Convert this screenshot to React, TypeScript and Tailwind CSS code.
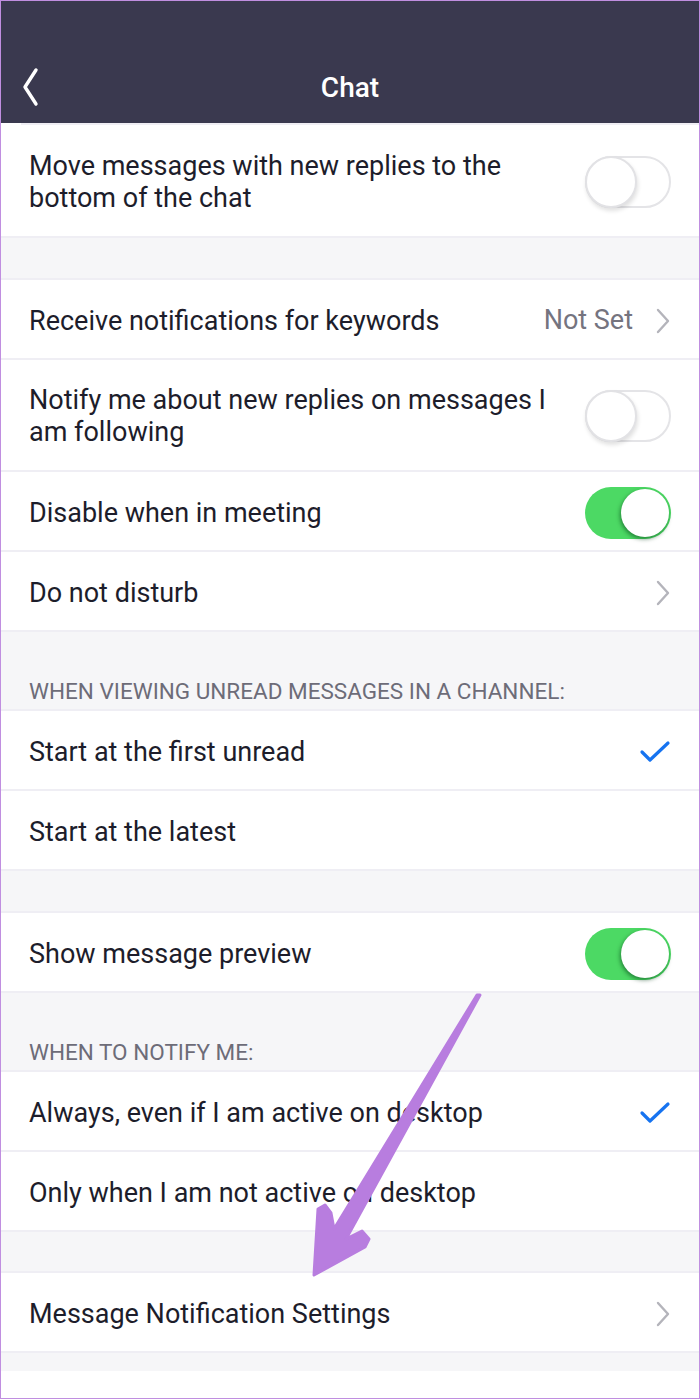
import React from 'react'

function Toggle({ on }: { on: boolean }) {
  if (on) {
    return (
      <div className="relative w-[86px] h-[52px] rounded-full bg-[#4cd964] shrink-0">
        <div className="absolute right-[2px] top-[2px] w-[48px] h-[48px] rounded-full bg-white shadow-[-1px_2px_4px_rgba(0,60,20,0.55)]" />
      </div>
    )
  }
  return (
    <div className="relative w-[86px] h-[52px] rounded-full bg-white border-2 border-[#e4e4e7] shrink-0">
      <div className="absolute -left-[2px] -top-[2px] w-[52px] h-[52px] rounded-full bg-white border-2 border-[#e2e2e5] shadow-[1px_3px_4px_rgba(0,0,0,0.12)]" />
    </div>
  )
}

function Chevron() {
  return (
    <svg width="16" height="28" viewBox="0 0 16 28" className="shrink-0">
      <path d="M3 3 L13 14 L3 25" fill="none" stroke="#b4b4bb" strokeWidth="2.4" strokeLinecap="round" strokeLinejoin="round" />
    </svg>
  )
}

function Check() {
  return (
    <svg width="32" height="24" viewBox="0 0 32 24" className="shrink-0">
      <path d="M3 12 L11 20 L29 3" fill="none" stroke="#1673f0" strokeWidth="3.2" strokeLinecap="round" strokeLinejoin="round" />
    </svg>
  )
}

function Row({ children, right, tall }: { children: React.ReactNode; right?: React.ReactNode; tall?: string }) {
  return (
    <div className={`flex items-center justify-between pl-[28px] pr-[28px] bg-white border-b-2 border-[#efeef4] ${tall ? tall + ' pt-[2px]' : 'h-[80px] pt-[3px]'}`}>
      <div className="text-[27px] leading-[32px] text-[#1d1d2b] pr-4">{children}</div>
      {right}
    </div>
  )
}

function Gap({ h = 'h-[42px]' }: { h?: string }) {
  return <div className={`${h} bg-[#f6f6f8] border-b-2 border-[#efeef4]`} />
}

function SectionTitle({ text }: { text: string }) {
  return (
    <div className="h-[79px] bg-[#f6f6f8] border-b-2 border-[#efeef4] flex items-end pl-[28px] pb-[4px]">
      <span className="text-[22.5px] leading-[28px] text-[#6d6c78]">{text}</span>
    </div>
  )
}

export default function App() {
  return (
    <div className="w-[700px] h-[1399px] border border-[#c08ee0] bg-white overflow-hidden relative" style={{ fontFamily: 'Roboto, "Noto Sans", sans-serif' }}>
      <header className="h-[122px] bg-[#3a394f] relative flex items-end justify-center pb-[17px]">
        <svg width="24" height="40" viewBox="0 0 24 40" className="absolute left-[19px] bottom-[16px]">
          <path d="M16 3 L5 20 L16 37" fill="none" stroke="white" strokeWidth="3.4" strokeLinecap="round" strokeLinejoin="round" />
        </svg>
        <h1 className="text-white text-[28px] font-medium leading-[36px]">Chat</h1>
      </header>
      <div className="h-[2px] bg-white"><div className="ml-[20px] h-[2px] bg-[#efeef4]" /></div>

      <Row tall="h-[113px]" right={<Toggle on={false} />}>
        Move messages with new replies to the<br />bottom of the chat
      </Row>
      <Gap />
      <Row
        right={
          <div className="flex items-center gap-[22px]">
            <span className="text-[27px] text-[#75747f]">Not Set</span>
            <Chevron />
          </div>
        }
      >
        Receive notifications for keywords
      </Row>
      <Row tall="h-[112px]" right={<Toggle on={false} />}>
        Notify me about new replies on messages I<br />am following
      </Row>
      <Row right={<Toggle on />}>Disable when in meeting</Row>
      <Row right={<Chevron />}>Do not disturb</Row>
      <SectionTitle text="WHEN VIEWING UNREAD MESSAGES IN A CHANNEL:" />
      <Row right={<Check />}>Start at the first unread</Row>
      <Row>Start at the latest</Row>
      <Gap />
      <Row right={<Toggle on />}>Show message preview</Row>
      <SectionTitle text="WHEN TO NOTIFY ME:" />
      <Row right={<Check />}>Always, even if I am active on desktop</Row>
      <Row>Only when I am not active on desktop</Row>
      <Gap h="h-[41px]" />
      <Row right={<Chevron />}>Message Notification Settings</Row>
      <div className="h-[18px] bg-[#f6f6f8]" />

      <svg width="700" height="1399" viewBox="0 0 700 1399" className="absolute left-0 top-0 pointer-events-none">
        <path
          d="M479 994 L345 1238 L361 1230 L368 1238 L364 1246 L313 1274 L317 1208 L324 1204 L330 1212 L333 1228 L476 994 Z"
          fill="#b87ddf"
          stroke="#b87ddf"
          strokeWidth="3"
          strokeLinejoin="round"
        />
      </svg>
    </div>
  )
}
